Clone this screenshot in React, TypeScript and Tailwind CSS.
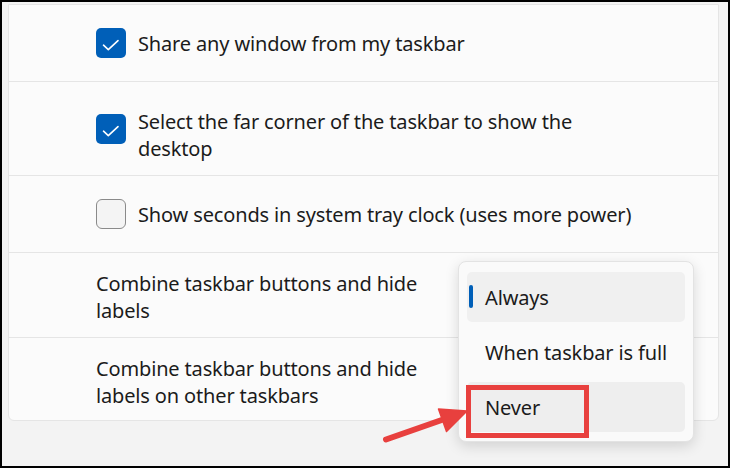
import React from "react";

const font = { fontFamily: '"Noto Sans", "Open Sans", sans-serif' };

function Check({ checked }: { checked: boolean }) {
  if (checked) {
    return (
      <div className="w-[30px] h-[30px] shrink-0 rounded-[5px] bg-[#005fb8] flex items-center justify-center">
        <svg width="30" height="30" viewBox="0 0 30 30">
          <path d="M7.5 17.2 L12.3 21.6 L22 12.6" fill="none" stroke="#ffffff" strokeWidth="1.6" strokeLinecap="round" strokeLinejoin="round" />
        </svg>
      </div>
    );
  }
  return <div className="w-[30px] h-[30px] shrink-0 rounded-[6px] bg-[#f4f4f4] border border-[#8a8a8a]" />;
}

export default function App() {
  return (
    <div
      className="relative w-[730px] h-[468px] overflow-hidden border-2 border-black bg-[#f3f3f3] text-[#1b1b1b] text-[20px] leading-[27px] tracking-[-0.15px]"
      style={font}
    >
      <div className="ml-[6px] mt-[2px] w-[711px] bg-[#fbfbfb] border-x border-t border-b border-[#e5e5e5] rounded-b-[6px]">
        <div className="h-[77px] flex items-center pl-[87px] gap-[12px] border-b border-[#e5e5e5]">
          <Check checked />
          <span>Share any window from my taskbar</span>
        </div>
        <div className="h-[94px] flex items-start pl-[87px] gap-[12px] pt-[26px] border-b border-[#e5e5e5]">
          <div className="mt-[6px]">
            <Check checked />
          </div>
          <span className="w-[450px]">Select the far corner of the taskbar to show the desktop</span>
        </div>
        <div className="h-[77px] flex items-center pl-[87px] gap-[12px] border-b border-[#e5e5e5]">
          <Check checked={false} />
          <span>Show seconds in system tray clock (uses more power)</span>
        </div>
        <div className="h-[85px] flex items-center pl-[87px] pt-[3px] border-b border-[#e5e5e5]">
          <span className="w-[330px]">Combine taskbar buttons and hide labels</span>
        </div>
        <div className="h-[82px] flex items-center pl-[87px] pt-[5px]">
          <span className="w-[330px]">Combine taskbar buttons and hide labels on other taskbars</span>
        </div>
      </div>

      {/* dropdown menu */}
      <div className="absolute left-[456px] top-[259px] w-[236px] h-[181px] rounded-[8px] border border-[#e3e3e3] bg-[#fafafa] shadow-[0_4px_14px_rgba(0,0,0,0.14)] px-[8px] pt-[10px] flex flex-col gap-[5px]">
        <div className="relative h-[50px] rounded-[5px] bg-[#f0f0f0] flex items-center pl-[18px]">
          <div className="absolute left-[2px] top-[13px] w-[4px] h-[23px] rounded-full bg-[#005fb8]" />
          <span>Always</span>
        </div>
        <div className="h-[50px] rounded-[5px] flex items-center pl-[18px]">
          <span>When taskbar is full</span>
        </div>
        <div className="h-[50px] rounded-[5px] bg-[#eeeeee] flex items-center pl-[18px]">
          <span>Never</span>
        </div>
      </div>

      {/* red highlight box */}
      <div className="absolute left-[464px] top-[383px] w-[123px] h-[53px] border-[5px] border-[#e8403e]" />

      {/* arrow */}
      <svg className="absolute left-[-2px] top-[-2px] pointer-events-none" width="730" height="468" viewBox="0 0 730 468">
        <line x1="386" y1="439.5" x2="446" y2="418.5" stroke="#e8403e" strokeWidth="6" strokeLinecap="round" />
        <polygon points="467,411 438.5,409 446.5,431.5" fill="#e8403e" stroke="#e8403e" strokeWidth="1.5" strokeLinejoin="round" />
      </svg>
    </div>
  );
}
